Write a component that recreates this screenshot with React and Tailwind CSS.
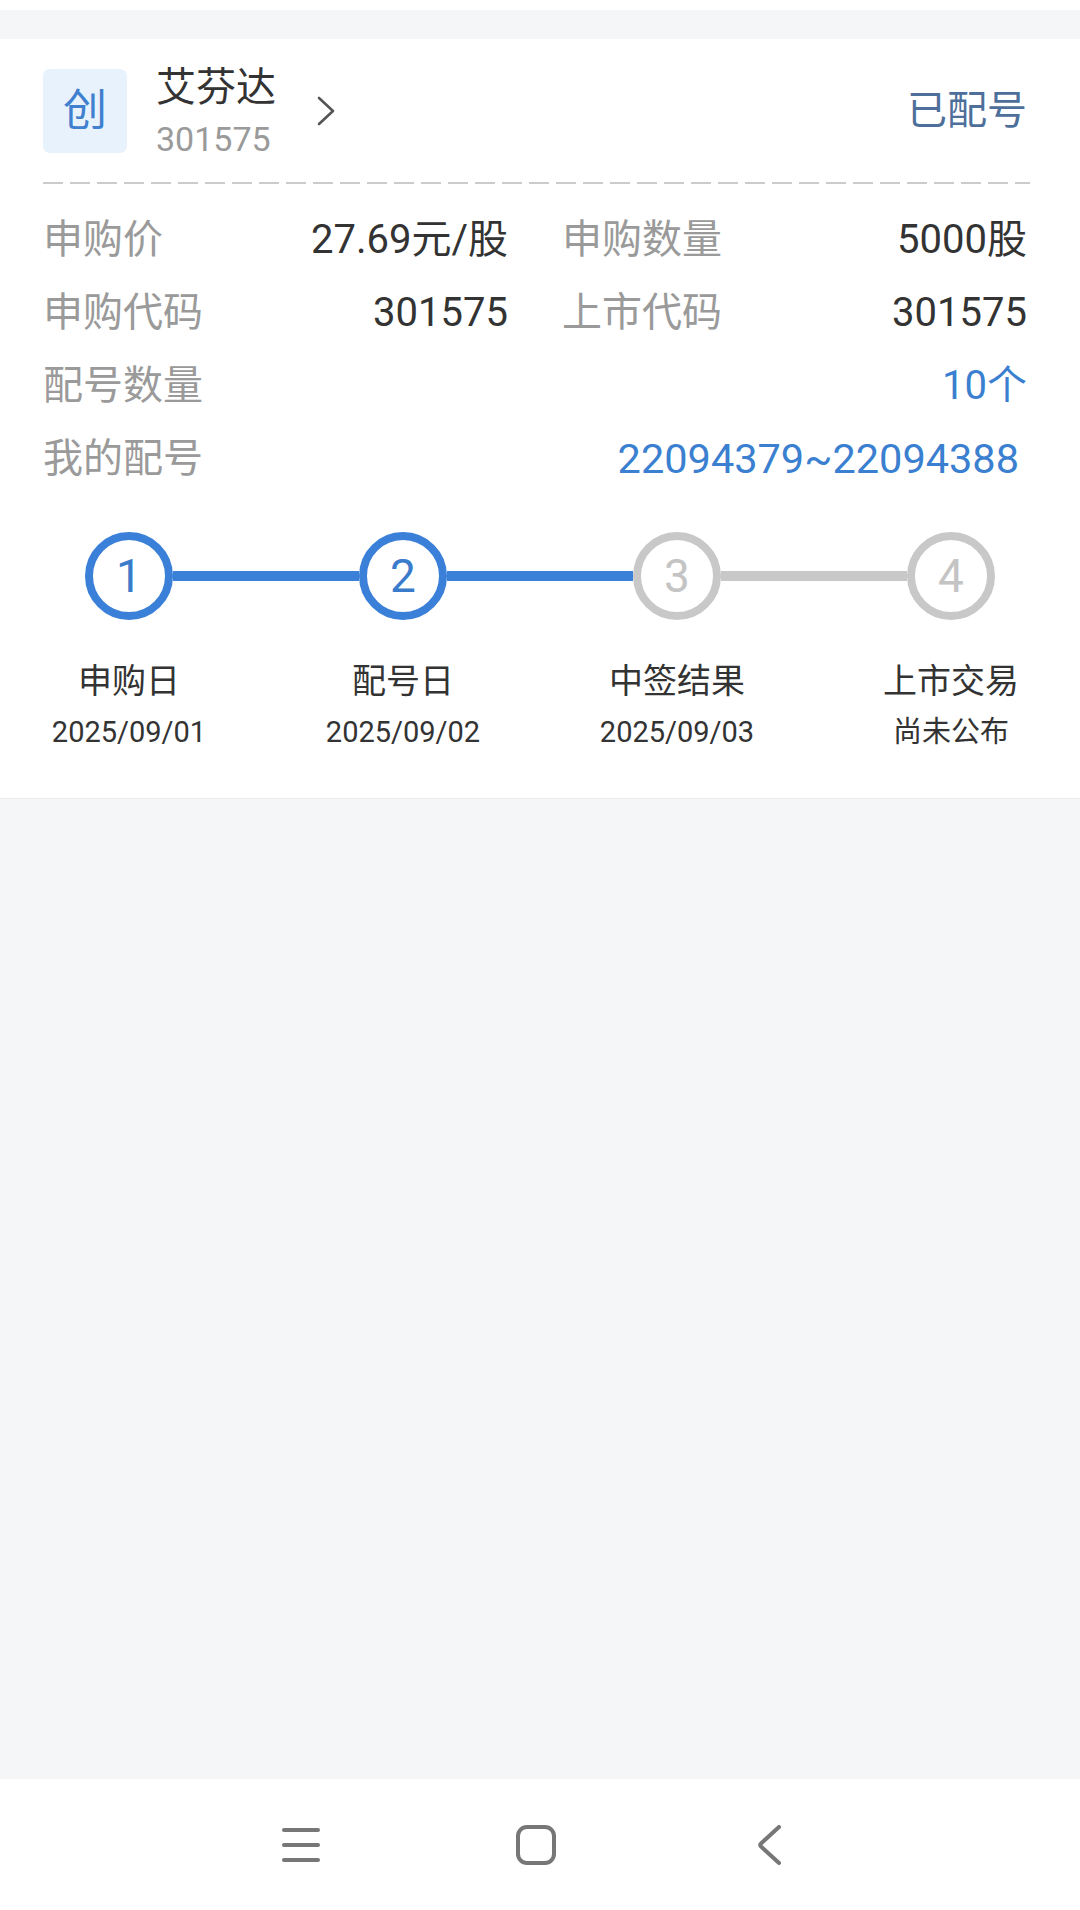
import React from "react";

const rows = [
  [
    ["申购价", "27.69元/股"],
    ["申购数量", "5000股"],
  ],
  [
    ["申购代码", "301575"],
    ["上市代码", "301575"],
  ],
];

const steps = [
  { n: "1", label: "申购日", sub: "2025/09/01", active: true },
  { n: "2", label: "配号日", sub: "2025/09/02", active: true },
  { n: "3", label: "中签结果", sub: "2025/09/03", active: false },
  { n: "4", label: "上市交易", sub: "尚未公布", active: false },
];

function Circle({ n, active }) {
  return (
    <div
      className={
        active
          ? "w-[88px] h-[88px] shrink-0 rounded-full border-[8px] border-[#3a7fd8] flex items-center justify-center text-[46px] leading-none text-[#3a7bcc]"
          : "w-[88px] h-[88px] shrink-0 rounded-full border-[8px] border-[#c8c8c8] flex items-center justify-center text-[46px] leading-none text-[#c4c4c4]"
      }
    >
      {n}
    </div>
  );
}

export default function App() {
  return (
    <div className="min-h-[1910px] w-[1080px] flex flex-col bg-[#f5f6f8] font-[Roboto,'Noto_Sans_CJK_SC',sans-serif]">
      <div className="h-[10px] bg-white" />
      <div className="h-[29px]" />
      {/* card */}
      <div className="bg-white border-b border-[#e9eaec]">
        <div className="pl-[43px] pr-[50px] pt-[30px]">
          {/* header */}
          <div className="flex items-start h-[84px] pr-[3px]">
            <div className="w-[84px] h-[84px] rounded-[7px] bg-[#e8f2fd] flex items-center justify-center text-[44px] leading-none text-[#3f80cf]">
              创
            </div>
            <div className="ml-[29px] -mt-[1px] flex flex-col">
              <div className="text-[40px] leading-[40px] text-[#333333]">艾芬达</div>
              <div className="mt-[11px] text-[34px] leading-[40px] text-[#9a9a9a]">301575</div>
            </div>
            <div className="ml-[40px] self-center">
              <svg width="20" height="32" viewBox="0 0 20 32" fill="none">
                <polyline points="3,3 17,16 3,29" stroke="#555555" strokeWidth="2.6" strokeLinecap="round" strokeLinejoin="round" />
              </svg>
            </div>
            <div className="ml-auto self-center text-[40px] leading-[44px] text-[#4e6f9a]">已配号</div>
          </div>
          {/* dashed line */}
          <div className="mt-[29px] h-[2px] bg-[repeating-linear-gradient(90deg,#cccccc_0px,#cccccc_20px,transparent_20px,transparent_27px)]" />
          {/* rows */}
          <div className="mt-[19px] flex flex-col pr-[3px]">
            {rows.map((r, i) => (
              <div key={i} className="grid grid-cols-2 gap-x-[54px] h-[73px]">
                {r.map(([k, v]) => (
                  <div key={k} className="flex items-center justify-between text-[40px] leading-[73px]">
                    <span className="text-[#9a9a9a]">{k}</span>
                    <span className="text-[#333333]">{v}</span>
                  </div>
                ))}
              </div>
            ))}
            <div className="flex items-center justify-between h-[73px] text-[40px] leading-[73px]">
              <span className="text-[#9a9a9a]">配号数量</span>
              <span className="text-[#3a7fd0]">10个</span>
            </div>
            <div className="flex items-center justify-between h-[73px] text-[40px] leading-[73px]">
              <span className="text-[#9a9a9a]">我的配号</span>
              <span className="text-[41.5px] text-[#3a7fd0] mr-[8px]">22094379~22094388</span>
            </div>
          </div>
        </div>
        {/* steps */}
        <div className="mt-[37px] px-[85px] flex items-center">
          <Circle n="1" active />
          <div className="flex-1 h-[10px] bg-[#3a7fd8]" />
          <Circle n="2" active />
          <div className="flex-1 h-[10px] bg-[#3a7fd8]" />
          <Circle n="3" />
          <div className="flex-1 h-[10px] bg-[#c8c8c8]" />
          <Circle n="4" />
        </div>
        <div className="mt-[39px] px-[42px] pb-[48px] flex justify-between">
          {steps.map((s) => (
            <div key={s.n} className="w-[174px] flex flex-col items-center">
              <div className="text-[34px] leading-[44px] text-[#333333] whitespace-nowrap">{s.label}</div>
              <div className="mt-[11px] text-[29px] leading-[36px] text-[#333333] whitespace-nowrap">{s.sub}</div>
            </div>
          ))}
        </div>
      </div>
      <div className="flex-1" />
      {/* nav bar */}
      <div className="h-[131px] bg-white flex items-center">
        <svg className="ml-[282px]" width="38" height="36" viewBox="0 0 38 36" fill="none">
          <line x1="2" y1="3" x2="36" y2="3" stroke="#777777" strokeWidth="4" strokeLinecap="round" />
          <line x1="2" y1="18" x2="36" y2="18" stroke="#777777" strokeWidth="4" strokeLinecap="round" />
          <line x1="2" y1="33" x2="36" y2="33" stroke="#777777" strokeWidth="4" strokeLinecap="round" />
        </svg>
        <svg className="ml-[196px]" width="40" height="40" viewBox="0 0 40 40" fill="none">
          <rect x="2" y="2" width="36" height="36" rx="9" stroke="#777777" strokeWidth="4" />
        </svg>
        <svg className="ml-[199px]" width="28" height="40" viewBox="0 0 28 40" fill="none">
          <path d="M24 2 L6 18.5 Q4.3 20 6 21.5 L24 38" stroke="#777777" strokeWidth="4" strokeLinecap="round" strokeLinejoin="round" />
        </svg>
      </div>
    </div>
  );
}
